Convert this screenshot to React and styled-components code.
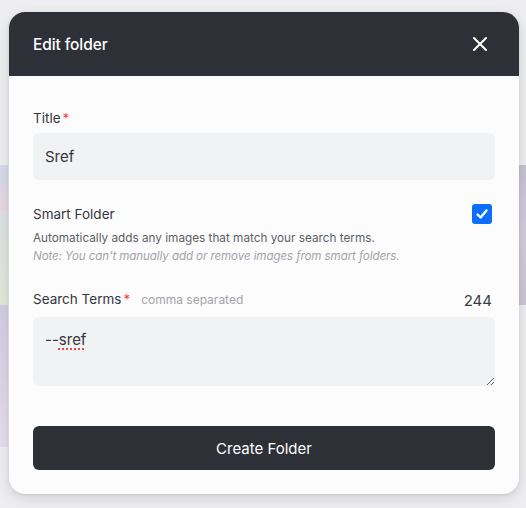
import React from "react";
import styled, { createGlobalStyle } from "styled-components";

const GlobalStyle = createGlobalStyle`
	* {
		box-sizing: border-box;
	}
	html, body {
		margin: 0;
		padding: 0;
		background: #f0f0f2;
		font-family: Inter, "Noto Sans", "Liberation Sans", sans-serif;
	}
`;

const Page = styled("div")`
	width: 526px;
	height: 508px;
	position: relative;
	overflow: hidden;
	background: #eeeef1;
`;

const Gallery = styled("div")`
	display: flex;
	justify-content: space-between;
	padding-top: 165px;
`;

const Column = styled("div")`
	width: ${(props) => props.w}px;
	display: flex;
	flex-direction: column;
`;

const Tile = styled("div")`
	height: ${(props) => props.h}px;
	background: ${(props) => props.bg};
`;

const Overlay = styled("div")`
	position: absolute;
	inset: 0;
	background: rgba(240, 240, 243, 0.3);
	display: flex;
	padding: 12px 0 0 9px;
`;

const Modal = styled("div")`
	width: 510px;
	height: 482px;
	border-radius: 16px;
	overflow: hidden;
	background: #fcfcfc;
	box-shadow: 0 4px 14px rgba(0, 0, 0, 0.12), 0 1px 3px rgba(0, 0, 0, 0.08);
	display: flex;
	flex-direction: column;
`;

const Header = styled("div")`
	height: 64px;
	background: #2e3038;
	display: flex;
	align-items: center;
	justify-content: space-between;
	padding: 0 32px 0 24px;
	color: #ffffff;

	h2 {
		margin: 0;
		font-size: 15.5px;
		font-weight: 500;
		letter-spacing: -0.1px;
	}
`;

const CloseButton = styled("button")`
	border: 0;
	background: none;
	padding: 0;
	display: flex;
	cursor: pointer;
	color: #ffffff;
`;

const Body = styled("div")`
	display: flex;
	flex-direction: column;
	padding: 32px 24px 24px;
`;

const Field = styled("div")`
	display: flex;
	flex-direction: column;
	gap: ${(props) => props.gap || 5}px;
	margin-bottom: ${(props) => props.mb || 0}px;
`;

const LabelRow = styled("div")`
	display: flex;
	align-items: center;
	justify-content: space-between;
	height: 20px;
	padding-right: 3px;
`;

const Label = styled("label")`
	font-size: 13.5px;
	font-weight: 400;
	color: #34363e;
	display: flex;
	align-items: baseline;

	.req {
		color: #f0483e;
		margin-left: 2px;
	}

	.hint {
		margin-left: 11px;
		font-size: 12px;
		font-weight: 400;
		color: #a3a4ab;
	}
`;

const Counter = styled("span")`
	font-size: 15px;
	color: #3a3c44;
	padding-top: 2px;
`;

const Input = styled("input")`
	height: 47px;
	border: 0;
	border-radius: 6px;
	background: #f1f2f4;
	padding: 0 12px;
	font-family: inherit;
	font-size: 15px;
	color: #34363d;
	outline: none;
`;

const TextArea = styled("div")`
	height: 69px;
	border-radius: 6px;
	background: #f1f2f4;
	padding: 14px 12px;
	font-size: 15px;
	line-height: 18px;
	color: #34363d;
	resize: vertical;
	overflow: auto;

	.typo {
		text-decoration: underline dotted #f0483e;
		text-decoration-thickness: 2px;
		text-underline-offset: 3px;
	}
`;

const CheckBox = styled("span")`
	width: 20px;
	height: 20px;
	border-radius: 3px;
	background: #0d6efd;
	display: flex;
	align-items: center;
	justify-content: center;
`;

const Help = styled("p")`
	margin: 0;
	font-size: ${(props) => (props.note ? "11.6px" : "11.75px")};
	line-height: 18px;
	color: ${(props) => (props.note ? "#a3a4ab" : "#5d5f67")};
	font-style: ${(props) => (props.note ? "italic" : "normal")};
	letter-spacing: ${(props) => (props.note ? "-0.1px" : "0")};
`;

const Submit = styled("button")`
	margin-top: 40px;
	height: 44px;
	border: 0;
	border-radius: 6px;
	background: #2e3038;
	color: #ffffff;
	font-family: inherit;
	font-size: 15px;
	font-weight: 400;
	cursor: pointer;
`;

export default function App() {
	return (
		<Page>
			<GlobalStyle />
			<Gallery>
				<Column w={8}>
					<Tile h={45} bg="linear-gradient(180deg, #c5d1e6, #e8cbd8)" />
					<Tile h={95} bg="linear-gradient(180deg, #d6d9dd, #dde4cc)" />
					<Tile h={142} bg="linear-gradient(180deg, #c6bedc, #d9cbe4 60%, #e2d5ea)" />
				</Column>
				<Column w={7}>
					<Tile h={140} bg="linear-gradient(180deg, #b5aec4, #c6bdd2 50%, #bbb3c6)" />
				</Column>
			</Gallery>
			<Overlay>
				<Modal>
					<Header>
						<h2>Edit folder</h2>
						<CloseButton aria-label="Close">
							<svg width="14" height="14" viewBox="0 0 14 14" fill="none">
								<path
									d="M1 1L13 13M13 1L1 13"
									stroke="currentColor"
									strokeWidth="2"
									strokeLinecap="round"
								/>
							</svg>
						</CloseButton>
					</Header>
					<Body>
						<Field mb={24}>
							<LabelRow>
								<Label>
									Title<span className="req">*</span>
								</Label>
							</LabelRow>
							<Input defaultValue="Sref" />
						</Field>

						<Field gap={5} mb={24}>
							<LabelRow>
								<Label>Smart Folder</Label>
								<CheckBox>
									<svg width="14" height="14" viewBox="0 0 14 14" fill="none">
										<path
											d="M2.5 7.5L5.6 10.5L11.5 3.5"
											stroke="#ffffff"
											strokeWidth="2.4"
											strokeLinecap="round"
											strokeLinejoin="round"
										/>
									</svg>
								</CheckBox>
							</LabelRow>
							<div>
								<Help>Automatically adds any images that match your search terms.</Help>
								<Help note>
									Note: You can't manually add or remove images from smart folders.
								</Help>
							</div>
						</Field>

						<Field gap={8}>
							<LabelRow>
								<Label>
									Search Terms<span className="req">*</span>
									<span className="hint">comma separated</span>
								</Label>
								<Counter>244</Counter>
							</LabelRow>
							<TextArea>
								--<span className="typo">sref</span>
							</TextArea>
						</Field>

						<Submit>Create Folder</Submit>
					</Body>
				</Modal>
			</Overlay>
		</Page>
	);
}
